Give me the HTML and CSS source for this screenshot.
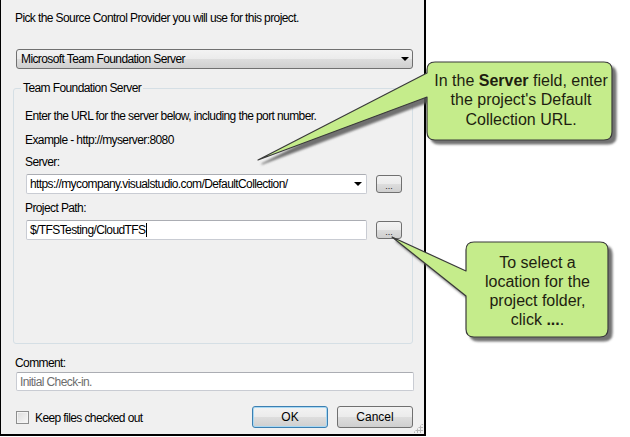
FILE: index.html
```html
<!DOCTYPE html>
<html>
<head>
<meta charset="utf-8">
<link rel="stylesheet" href="styles.css">
</head>
<body>
<div class="page">
  <div class="dlg">
    <p class="intro">Pick the Source Control Provider you will use for this project.</p>
    <div class="dropdown"><span>Microsoft Team Foundation Server</span><i class="arrow"></i></div>
    <div class="group">
      <div class="legend">Team Foundation Server</div>
      <p class="txt first">Enter the URL for the server below, including the port number.</p>
      <p class="txt ex">Example - http://myserver:8080</p>
      <p class="txt lbl">Server:</p>
      <div class="row">
        <div class="field"><span>https://mycompany.visualstudio.com/DefaultCollection/</span><i class="arrow"></i></div>
        <div class="browse">...</div>
      </div>
      <p class="txt lbl2">Project Path:</p>
      <div class="row">
        <div class="field"><span>$/TFSTesting/CloudTFS</span><span class="caret"></span></div>
        <div class="browse">...</div>
      </div>
    </div>
    <p class="txt comment-lbl">Comment:</p>
    <div class="field comment"><span>Initial Check-in.</span></div>
    <div class="footer">
      <div class="chk"><span class="box"></span><span>Keep files checked out</span></div>
      <div class="btns">
        <div class="btn ok">OK</div>
        <div class="btn">Cancel</div>
      </div>
    </div>
    <div class="grip"></div>
  </div>

  <svg class="callouts" width="630" height="437" viewBox="0 0 630 437">
    <defs>
      <filter id="sh" x="-10%" y="-10%" width="130%" height="130%">
        <feDropShadow dx="4" dy="4" stdDeviation="1.2" flood-color="#5a5a5a" flood-opacity="0.85"/>
      </filter>
    </defs>
    <path class="bubble" filter="url(#sh)" d="M 435 62 H 604 Q 612 62 612 70 V 132 Q 612 140 604 140 H 435 Q 427 140 427 132 V 97 L 258 160 L 427 73 V 70 Q 427 62 435 62 Z"/>
    <path class="bubble" filter="url(#sh)" d="M 474 242 H 600 Q 608 242 608 250 V 329 Q 608 337 600 337 H 474 Q 466 337 466 329 V 296 L 392 237 L 466 271 V 250 Q 466 242 474 242 Z"/>
  </svg>
  <div class="note note1"><p>In the <b>Server</b> field, enter<br>the project's Default<br>Collection URL.</p></div>
  <div class="note note2"><p>To select a<br>location for the<br>project folder,<br>click <b>...</b>.</p></div>
</div>
</body>
</html>
```

FILE: styles.css
```css
html, body {
  margin: 0;
  padding: 0;
  background: #ffffff;
}
.page {
  position: relative;
  width: 630px;
  height: 437px;
  font-family: "Liberation Sans", Arial, sans-serif;
}
.dlg {
  box-sizing: border-box;
  width: 426px;
  height: 436px;
  background: #f0f0f0;
  border-left: 1px solid #000;
  border-right: 2px solid #000;
  border-bottom: 2px solid #000;
  padding: 11px 10px 0 14px;
  display: flex;
  flex-direction: column;
  position: relative;
  font-size: 12px;
  letter-spacing: -0.6px;
  color: #000;
}
p { margin: 0; }
.intro, .txt {
  line-height: 15px;
  height: 15px;
  white-space: nowrap;
}
.dropdown {
  box-sizing: border-box;
  margin: 23px 1px 0 1px;
  height: 20px;
  border: 1px solid #707070;
  border-radius: 3px;
  background: linear-gradient(#f3f3f3 0%, #ebebeb 50%, #dddddd 51%, #cfcfcf 100%);
  display: flex;
  align-items: center;
  padding-left: 4px;
  position: relative;
}
.arrow {
  width: 0;
  height: 0;
  border-left: 4px solid transparent;
  border-right: 4px solid transparent;
  border-top: 4px solid #000;
  margin-left: auto;
  margin-right: 3px;
}
.group {
  margin: 19px 1px 0 -2px;
  border: 1px solid #d5dfe5;
  border-radius: 3px;
  padding: 0 10px 103px 11px;
  display: flex;
  flex-direction: column;
}
.legend {
  align-self: flex-start;
  margin: -8px 0 0 -4px;
  padding: 0 2px;
  background: #f0f0f0;
  line-height: 15px;
  height: 15px;
}
.group .first { margin-top: 13px; }
.group .ex { margin-top: 9px; }
.group .lbl { margin-top: 7px; }
.group .lbl2 { margin-top: 7px; }
.row {
  display: flex;
  align-items: center;
  gap: 9px;
  margin: 4px 0 0 1px;
  height: 20px;
}
.field {
  box-sizing: border-box;
  width: 341px;
  height: 20px;
  background: #fff;
  border: 1px solid #c9ccd3;
  border-top-color: #abadb3;
  border-radius: 2px;
  display: flex;
  align-items: center;
  padding-left: 3px;
  white-space: nowrap;
}
.field .arrow { margin-right: 4px; }
.caret {
  display: inline-block;
  width: 1px;
  height: 14px;
  background: #000;
  margin-left: 1px;
}
.browse {
  box-sizing: border-box;
  width: 26px;
  height: 18px;
  border: 1px solid #707070;
  border-radius: 3px;
  background: linear-gradient(#f3f3f3 0%, #ebebeb 50%, #dddddd 51%, #cfcfcf 100%);
  font-size: 9px;
  letter-spacing: 0;
  text-align: center;
  line-height: 20px;
  color: #222;
}
.comment-lbl { margin-top: 12px; }
.comment {
  margin: 1px 0 0 1px;
  width: auto;
  height: 19px;
  color: #6d6d6d;
}
.footer {
  display: flex;
  align-items: center;
  margin: 15px 1px 0 1px;
  height: 22px;
}
.chk {
  display: flex;
  align-items: center;
  gap: 6px;
  margin-top: 1px;
}
.box {
  box-sizing: border-box;
  width: 13px;
  height: 13px;
  border: 1px solid #8e8f8f;
  background: linear-gradient(135deg, #dcdcdc, #f8f8f8);
  box-shadow: inset 0 0 0 1px #f4f4f4;
}
.btns {
  margin-left: auto;
  display: flex;
  gap: 9px;
}
.btn {
  box-sizing: border-box;
  width: 76px;
  height: 22px;
  border: 1px solid #707070;
  border-radius: 3px;
  background: linear-gradient(#f3f3f3 0%, #ebebeb 50%, #dddddd 51%, #cfcfcf 100%);
  text-align: center;
  line-height: 20px;
  letter-spacing: 0;
}
.btn.ok {
  border-color: #3c7fb1;
  box-shadow: inset 0 0 0 1px #a8d8f3;
}
.grip {
  position: absolute;
  right: 1px;
  bottom: 1px;
  width: 10px;
  height: 10px;
  background-image: radial-gradient(circle, #b8b8b8 1px, transparent 1.2px);
  background-size: 3px 3px;
  clip-path: polygon(100% 0, 100% 100%, 0 100%);
}
.callouts {
  position: absolute;
  left: 0;
  top: 0;
  pointer-events: none;
}
.bubble {
  fill: #c5ec8b;
  stroke: #3a3a3a;
  stroke-width: 1.2;
  stroke-linejoin: round;
}
.note {
  position: absolute;
  display: flex;
  align-items: center;
  justify-content: center;
  text-align: center;
  font-family: "Liberation Sans", Arial, sans-serif;
  font-size: 16px;
  line-height: 19.5px;
  color: #1e1e10;
}
.note p {
  margin: 0;
  white-space: nowrap;
}
.note1 {
  left: 428px;
  top: 62px;
  width: 186px;
  height: 76px;
}
.note2 {
  left: 466px;
  top: 244px;
  width: 143px;
  height: 94px;
  line-height: 19px;
}
```
